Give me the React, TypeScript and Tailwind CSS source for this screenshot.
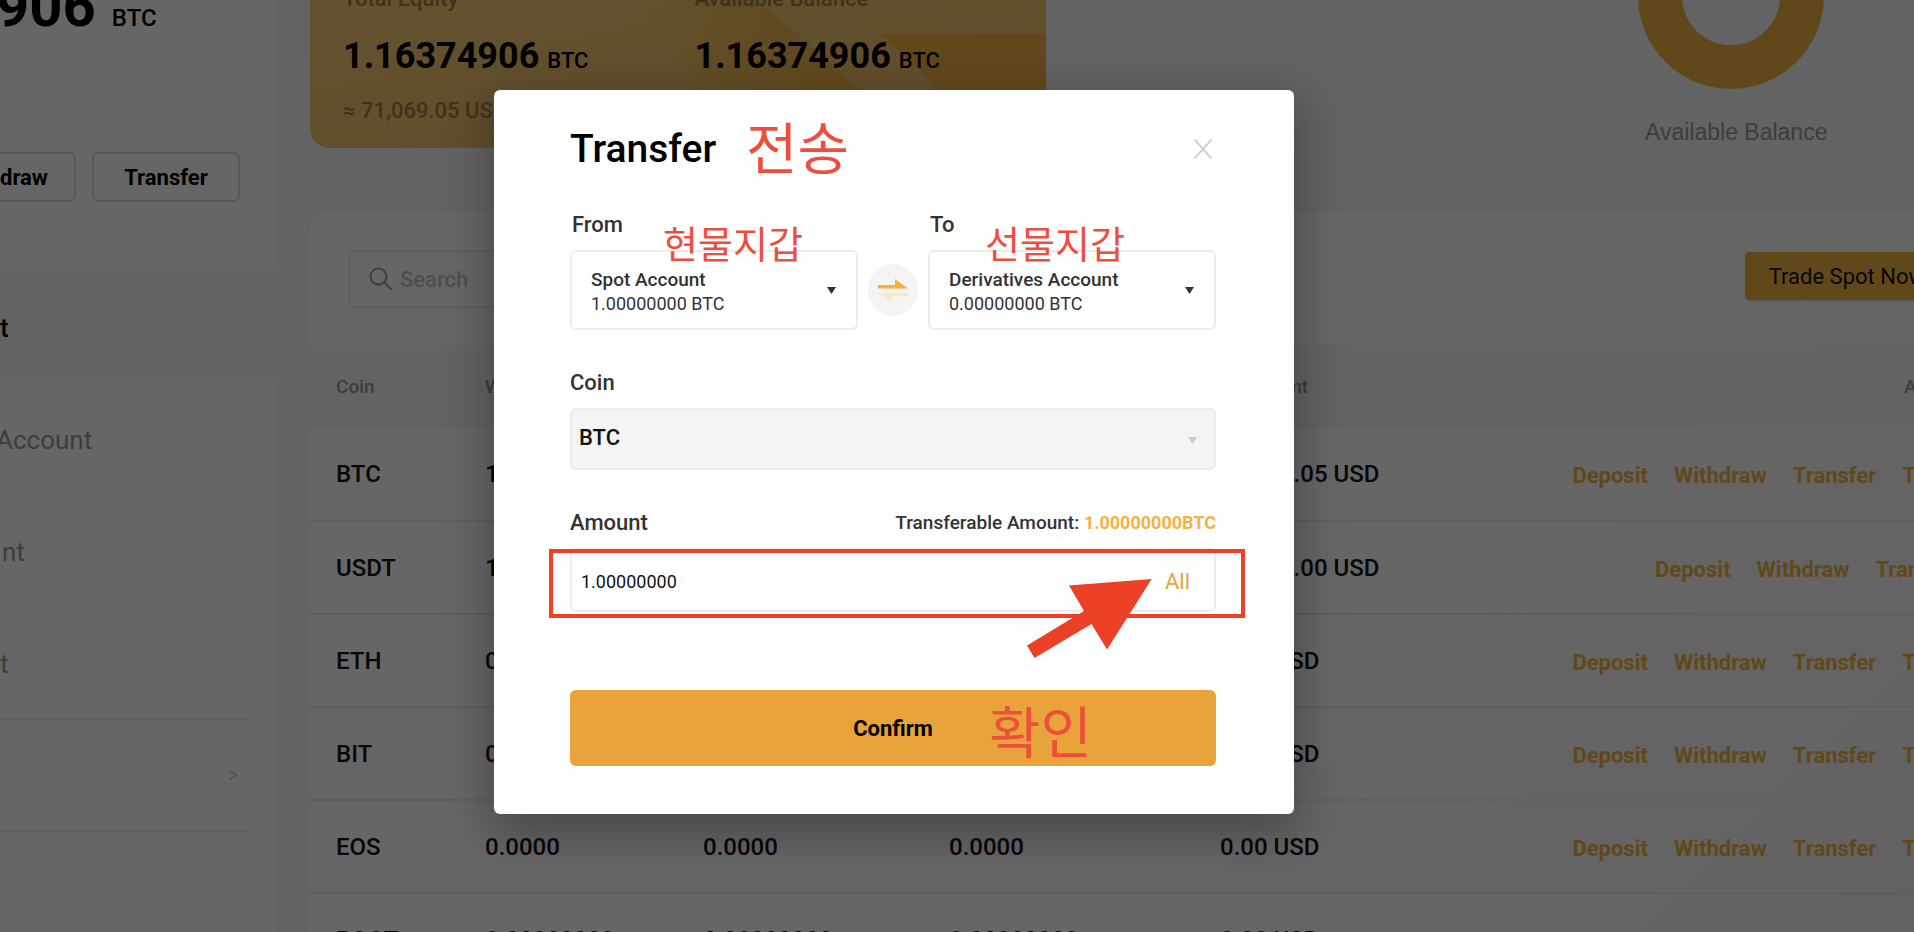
import React, { useState } from "react";
import type { ReactNode } from "react";

type Row = {
  coin: string;
  wallet: string;
  equity: string;
  available: string;
  value: string;
  actions: string[];
};

const ALL_ACTIONS = ["Deposit", "Withdraw", "Transfer", "Trade"];

const ROWS: Row[] = [
  { coin: "BTC", wallet: "1.16374906", equity: "1.16374906", available: "1.16374906", value: "71,069.05 USD", actions: ALL_ACTIONS },
  { coin: "USDT", wallet: "10,000.0000", equity: "10,000.0000", available: "10,000.0000", value: "10,000.00 USD", actions: ["Deposit", "Withdraw", "Transfer"] },
  { coin: "ETH", wallet: "0.0000", equity: "0.0000", available: "0.0000", value: "0.00 USD", actions: ALL_ACTIONS },
  { coin: "BIT", wallet: "0.0000", equity: "0.0000", available: "0.0000", value: "0.00 USD", actions: ALL_ACTIONS },
  { coin: "EOS", wallet: "0.0000", equity: "0.0000", available: "0.0000", value: "0.00 USD", actions: ALL_ACTIONS },
  { coin: "BOOT", wallet: "0.00000000", equity: "0.00000000", available: "0.00000000", value: "0.00 USD", actions: ALL_ACTIONS },
];

function Caret({ className }: { className: string }) {
  return (
    <svg aria-hidden="true" viewBox="0 0 9 7" className={`h-[7px] w-[9px] ${className}`}>
      <path d="M0 0h9L4.5 7z" fill="currentColor" />
    </svg>
  );
}

function Sidebar() {
  return (
    <aside className="flex w-[278px] shrink-0 flex-col">
      <div className="flex flex-col bg-white pb-[68px]">
        <div className="-mt-6 -ml-1 flex items-baseline gap-4 font-bold text-black">
          <span className="text-[58px] leading-[60px]">906</span>
          <span className="text-[24px] font-medium">BTC</span>
        </div>
        <div className="mt-[116px] -ml-1 flex gap-4">
          <button type="button" className="h-[50px] w-20 rounded-md border-2 border-[#dcdcdc] pl-0.5 text-left text-[22px] font-bold">
            draw
          </button>
          <button type="button" className="h-[50px] w-[148px] rounded-md border-2 border-[#dcdcdc] text-[22px] font-bold">
            Transfer
          </button>
        </div>
      </div>
      <nav className="flex flex-1 flex-col text-[26px] text-[#999]">
        <a href="#spot" className="flex h-28 shrink-0 items-center pt-1 font-medium text-black">t</a>
        <div className="flex flex-1 flex-col bg-white">
          <a href="#derivatives" className="flex h-28 shrink-0 items-center pt-1">
            <span className="-ml-1">Account</span>
          </a>
          <a href="#earn" className="flex h-28 shrink-0 items-center pt-1 pl-0.5">nt</a>
          <a href="#invest" className="flex h-28 shrink-0 items-center pt-1">t</a>
          <a href="#history" aria-label="History" className="mr-[30px] flex h-28 shrink-0 items-center justify-end border-t-2 border-[#ececec] pr-[11px]">
            <svg aria-hidden="true" viewBox="0 0 8 10" className="h-2.5 w-2" fill="none" stroke="currentColor">
              <path d="M0.5 0.5 7.5 5 0.5 9.5" />
            </svg>
          </a>
          <div className="mr-[30px] border-t-2 border-[#ececec]" />
        </div>
      </nav>
    </aside>
  );
}

function Balance({ label, note }: { label: string; note: string }) {
  return (
    <div className="flex w-[352px] flex-col whitespace-nowrap">
      <span className="text-[22px] leading-[30px] font-medium text-[#9d7d47]">{label}</span>
      <span className="mt-5 flex items-baseline gap-2 text-[36px] leading-[44px] font-bold text-black">
        1.16374906
        <span className="text-[22px] leading-none font-medium">BTC</span>
      </span>
      <span className="mt-[18px] text-[22px] leading-[30px] font-medium text-[#9d7d47]">{note}</span>
    </div>
  );
}

function Summary() {
  return (
    <section className="flex h-[212px] items-start">
      <div className="relative w-[736px] overflow-hidden rounded-bl-[20px] bg-linear-to-br from-[#f8cd78] to-[#f2bd66] pb-[22px]">
        <svg aria-hidden="true" viewBox="0 0 736 148" className="absolute inset-0 h-full w-full">
          <defs>
            <linearGradient id="band" x1="0" x2="1" y1="0" y2="0">
              <stop offset="0" stopColor="#f3b444" stopOpacity="0" />
              <stop offset="0.6" stopColor="#f3b444" stopOpacity="0.8" />
            </linearGradient>
          </defs>
          <path d="M330 0H449L616 148H420z" fill="url(#band)" />
          <path d="M570 34H736V148H692z" fill="#f3b444" />
        </svg>
        <div className="relative -mt-4 flex pl-[33px]">
          <Balance label="Total Equity" note="≈ 71,069.05 USD" />
          <Balance label="Available Balance" note="≈ 71,069.05 USD" />
        </div>
      </div>
      <figure className="-mt-[97px] mr-[153px] ml-auto flex w-[194px] shrink-0 flex-col items-start">
        <svg aria-hidden="true" viewBox="0 0 186 186" className="h-[186px] w-[186px]">
          <circle cx="93" cy="93" r="71" fill="none" stroke="#f3b444" strokeWidth="44" />
        </svg>
        <figcaption className="mt-[28px] pl-[7px] [font-family:'Liberation_Sans',Arial,sans-serif] text-[23px] leading-[30px] whitespace-nowrap text-[#999]">
          Available Balance
        </figcaption>
      </figure>
    </section>
  );
}

function Assets() {
  return (
    <section className="rounded-tl-[16px] bg-linear-135 from-white from-60% to-[#f4f4f4]">
      <div className="flex h-[134px] items-start justify-between pt-[38px] pr-9 pl-[38px]">
        <label className="flex h-[58px] w-[400px] items-center gap-[7px] rounded-md border-2 border-[#ececec] pl-[19px] text-[#999]">
          <svg aria-hidden="true" viewBox="0 0 24 24" className="h-6 w-6" fill="none" stroke="currentColor" strokeWidth="2">
            <circle cx="9.5" cy="9.5" r="8" />
            <path d="m15.300 15.300 7.500 7.500" />
          </svg>
          <span className="sr-only">Search coin</span>
          <input type="text" placeholder="Search" className="min-w-0 flex-1 bg-transparent text-[22px] font-medium outline-none placeholder:text-[#c4c4c4]" />
        </label>
        <button type="button" className="mt-0.5 h-12 rounded bg-[#f3b444] px-6 text-[22px] whitespace-nowrap text-[#121212] shadow">
          Trade Spot Now
        </button>
      </div>
      <table className="w-full table-fixed border-collapse text-left">
        <colgroup>
          <col className="w-[175px]" />
          <col className="w-[218px]" />
          <col className="w-[246px]" />
          <col className="w-[271px]" />
          <col />
          <col className="w-[500px]" />
        </colgroup>
        <thead>
          <tr className="h-[82px] bg-[#f8f8f8] text-[19px] text-[#999] [&>th]:font-medium">
            <th className="pl-[26px]">Coin</th>
            <th>Wallet Balance</th>
            <th>Equity</th>
            <th>Available</th>
            <th>Equivalent</th>
            <th className="pr-[26px] text-right">Action</th>
          </tr>
        </thead>
        <tbody>
          {ROWS.map((row) => (
            <tr key={row.coin} className="h-[93px] border-b-2 border-[#ececec] text-[24px] font-medium text-[#121212]">
              <td className="pl-[26px]">{row.coin}</td>
              <td>{row.wallet}</td>
              <td>{row.equity}</td>
              <td>{row.available}</td>
              <td className="whitespace-nowrap">{row.value}</td>
              <td className="pr-[26px]">
                <div className="flex justify-end gap-[26px] pt-[3px] text-[22px] font-bold text-[#f3b444]">
                  {row.actions.map((action) => (
                    <a key={action} href={`#${action.toLowerCase()}`}>{action}</a>
                  ))}
                </div>
              </td>
            </tr>
          ))}
        </tbody>
      </table>
    </section>
  );
}

function AccountPicker({ id, label, name, amount }: { id: string; label: string; name: string; amount: string }) {
  return (
    <div className="flex flex-1 flex-col">
      <label htmlFor={id} className="pl-0.5 text-[22px] leading-[30px] font-medium">{label}</label>
      <button
        id={id}
        type="button"
        aria-haspopup="listbox"
        className="mt-2.5 flex h-20 items-center justify-between rounded-md border-2 border-[#ececec] pr-5 pl-[19px] text-left text-[18px] leading-6"
      >
        <span className="flex flex-col pt-1">
          <span className="text-[19px] font-medium">{name}</span>
          <span>{amount}</span>
        </span>
        <Caret className="text-[#333]" />
      </button>
    </div>
  );
}

function Note({ className, children }: { className: string; children: ReactNode }) {
  return (
    <span className={`pointer-events-none absolute [font-family:'Noto_Sans_CJK_KR',sans-serif] leading-none font-normal whitespace-nowrap text-[#ee4f3c] ${className}`}>
      {children}
    </span>
  );
}

function TransferDialog() {
  const [amount, setAmount] = useState("1.00000000");
  return (
    <div
      role="dialog"
      aria-modal="true"
      aria-labelledby="transfer-title"
      className="relative flex w-[800px] flex-col rounded-md bg-white pt-[39px] pr-[78px] pb-12 pl-[76px] text-[#333] shadow-[0_16px_48px_4px_rgba(0,0,0,0.3)]"
    >
      <header className="flex items-center justify-between pr-1">
        <h2 id="transfer-title" className="text-[39px] leading-10 font-medium text-black">Transfer</h2>
        <button type="button" aria-label="Close" className="text-[#ccc]">
          <svg aria-hidden="true" viewBox="0 0 18 20" className="h-5 w-[18px]" fill="none" stroke="currentColor" strokeWidth="1.800">
            <path d="M0.500 0.500 17.500 19.500M17.500 0.500 0.500 19.500" />
          </svg>
        </button>
      </header>

      <div className="mt-[41px] flex items-end">
        <AccountPicker id="from" label="From" name="Spot Account" amount="1.00000000 BTC" />
        <button type="button" aria-label="Swap accounts" className="mx-2.5 mb-3.5 flex h-[52px] w-[50px] items-center justify-center rounded-full bg-[#f4f4f4]">
          <svg aria-hidden="true" viewBox="0 0 30 23" className="h-[23px] w-[30px]">
            <path d="M0 6h17V0l13 9.500H0z" fill="#f7b03c" />
            <path d="M30 17.500H13V23L0 14h30z" fill="#f8e6cd" />
          </svg>
        </button>
        <AccountPicker id="to" label="To" name="Derivatives Account" amount="0.00000000 BTC" />
      </div>

      <label htmlFor="coin" className="mt-[38px] text-[22px] leading-[30px] font-medium">Coin</label>
      <div className="relative mt-2.5 flex">
        <select id="coin" disabled className="h-[62px] flex-1 appearance-none rounded-md border-2 border-[#ececec] bg-[#f4f4f4] pb-1 pl-[7px] text-[22px] font-medium text-[#121212] opacity-100">
          <option>BTC</option>
        </select>
        <Caret className="pointer-events-none absolute top-[29px] right-[19px] text-[#ccc]" />
      </div>

      <div className="mt-[38px] flex items-center justify-between font-medium">
        <label htmlFor="amount" className="text-[22px] leading-[30px]">Amount</label>
        <span className="text-[19px] leading-[30px]">
          Transferable Amount: <span className="text-[18px] font-bold text-[#f5b144]">1.00000000BTC</span>
        </span>
      </div>
      <div className="relative mt-2.5 flex h-16 items-center rounded-md border-2 border-[#ececec] pt-0.5 pr-6 pl-[9px]">
        <input
          id="amount"
          type="text"
          value={amount}
          onChange={(event) => setAmount(event.target.value)}
          className="min-w-0 flex-1 bg-transparent text-[18px] text-[#121212] outline-none"
        />
        <button type="button" onClick={() => setAmount("1.00000000")} className="text-[22px] text-[#e8a33a]">All</button>
        <span className="pointer-events-none absolute -top-px -right-[31px] -bottom-2 -left-[23px] border-4 border-[#ec4027]" />
      </div>

      <button type="submit" className="mt-[78px] h-[76px] rounded-md bg-[#e8a33a] text-[22px] font-bold text-black">
        Confirm
      </button>

      <Note className="top-[27px] left-[252px] text-[56px]">전송</Note>
      <Note className="top-[133px] left-[169px] text-[38px]">현물지갑</Note>
      <Note className="top-[133px] left-[491px] text-[38px]">선물지갑</Note>
      <Note className="top-[611px] left-[495px] text-[56px]">확인</Note>
      <svg aria-hidden="true" viewBox="0 0 125 80" className="pointer-events-none absolute top-[488px] left-[533px] h-20 w-[125px]">
        <path d="M124.700 1 42 7.500 57 33 0 67.500 7.500 80 64.500 46 80 71.500z" fill="#ec4027" />
      </svg>
    </div>
  );
}

export default function App() {
  return (
    <div className="relative h-screen overflow-hidden bg-[#f8f8f8] [font-family:Roboto,'Noto_Sans_CJK_KR',sans-serif]">
      <div className="flex h-full">
        <Sidebar />
        <main className="-mr-[71px] ml-8 min-w-0 flex-1">
          <Summary />
          <Assets />
        </main>
      </div>
      <div className="absolute inset-0 flex items-start justify-center bg-black/60 pt-[90px] pr-[126px]">
        <TransferDialog />
      </div>
    </div>
  );
}
